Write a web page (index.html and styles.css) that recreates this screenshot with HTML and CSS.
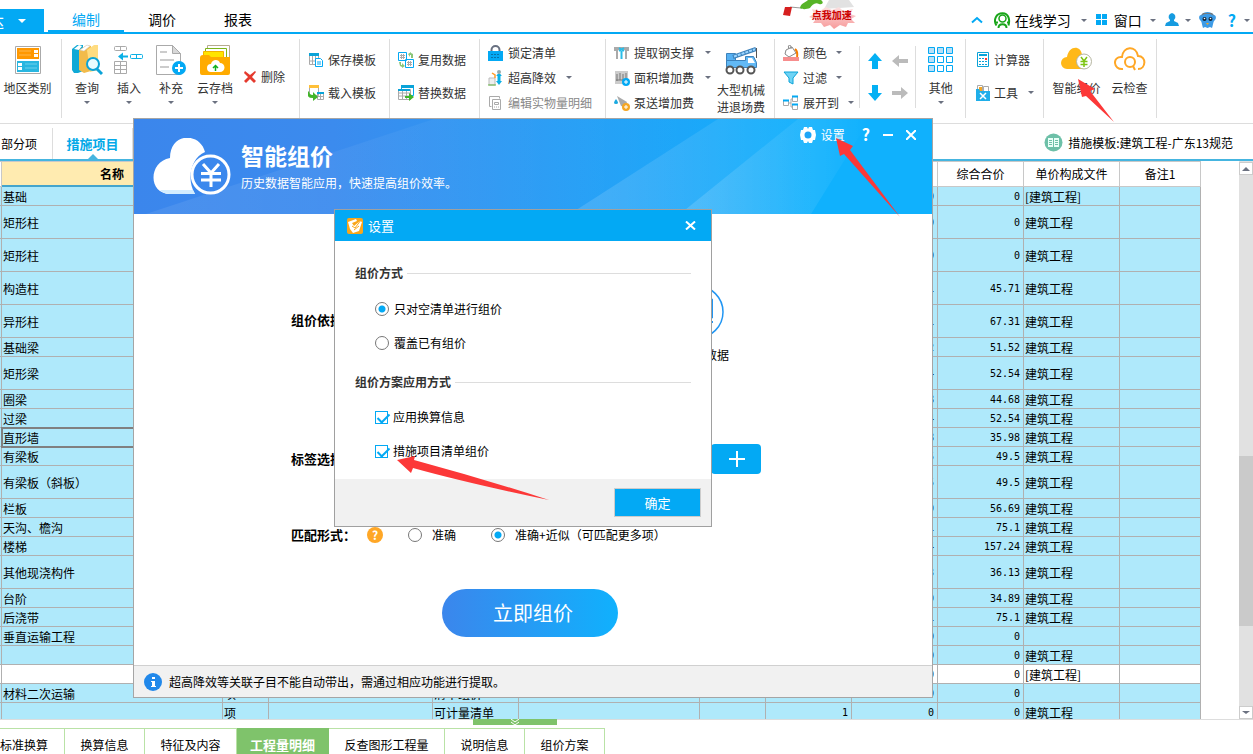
FILE: index.html
```html
<!DOCTYPE html>
<html lang="zh-CN">
<head>
<meta charset="utf-8">
<title>智能组价</title>
<link rel="stylesheet" href="styles.css">
</head>
<body>
<div class="app">
  <header class="topbar">
    <button class="app-menu">达<i class="caret"></i></button>
    <nav class="menu">
      <a href="#" class="active">编制</a>
      <a href="#">调价</a>
      <a href="#">报表</a>
    </nav>
    <a href="#" class="promo">
      <svg class="promo-art" width="78" height="32" viewBox="0 0 78 32">
        <defs><linearGradient id="burst" x2="0" y2="1"><stop offset="0" stop-color="#fbe0e0"/><stop offset="1" stop-color="#f79a9a"/></linearGradient></defs>
        <path d="M48 0h20l5 7-30 2z" fill="#e2e2e2"/>
        <path d="M9 7 20 8" stroke="#999" fill="none"/>
        <path d="M4 7l7 0-2 9-7-1z" fill="#d61f1f"/>
        <path d="M19 8c1-5 5-5 8-8h13c3 2 2 5-2 4-4-2-7 1-9 4-3 1-7 2-10 0z" fill="#57b427"/>
        <path d="M31 9l8 2 6-4 6 3 7-3 4 4 10-2-3 5 6 2-5 3 4 4-7 0-2 4-6-2-6 4-4-4-6 2-3-4-8 0 3-4-7-2 5-3z" fill="url(#burst)"/>
      </svg>
      <span>点我加速</span>
    </a>
    <div class="tools">
      <button aria-label="收起"><svg width="12" height="8" viewBox="0 0 12 8"><path d="M1 6.500 6 2l5 4.500" fill="none" stroke="#03a9f4" stroke-width="2"/></svg></button>
      <button class="learn"><svg width="17" height="17" viewBox="0 0 17 17" fill="none" stroke="#19a519"><circle cx="8.500" cy="6.500" r="3.500" stroke-width="1.500"/><path d="M2.500 13.500C-1 8 2 1.300 8.500 1.300S16 8 14.500 13.500" stroke-width="2"/><path d="M4.500 16c0-5 8-5 8 0M2 10.500h2M13 10.500h2" stroke-width="2"/></svg>在线学习<i class="caret"></i></button>
      <button class="win"><svg width="12" height="12" viewBox="0 0 12 12" fill="#03a9f4"><path d="M0 0h5v5H0zM6 0h5v5H6zM0 6h5v5H0zM6 6h5v5H6z"/></svg>窗口<i class="caret"></i></button>
      <button class="user" aria-label="用户"><svg width="14" height="14" viewBox="0 0 14 14" fill="#159be0"><path d="M7 0a4 4 0 0 1 2 7v1l4 2 1 3H0l1-3 4-2V7a4 4 0 0 1 2-7z"/></svg><i class="caret"></i></button>
      <button class="pet" aria-label="助手"><svg width="17" height="17" viewBox="0 0 17 17"><path d="M2 3c3-4 10-4 13 0 2 0 3 4 0 6-1 2-1 4-2 7l-2-1-2.500 1L6 15l-2 1C3 13 3 11 2 9-1 7 0 3 2 3z" fill="#3d9be6"/><path d="M2 4c4-3 9-3 13 0L13 1H4z" fill="#777"/><circle cx="5.500" cy="7" r="2" fill="#123"/><circle cx="11.500" cy="7" r="2" fill="#123"/><circle cx="5.500" cy="6.500" r=".8" fill="#fff"/><circle cx="11.500" cy="6.500" r=".8" fill="#fff"/><path d="M7 11h3l-1.500 2z" fill="#f5a623"/></svg></button>
      <button class="help"><b>?</b><i class="caret"></i></button>
    </div>
  </header>

  <section class="ribbon">
    <div class="group region">
      <button class="big"><svg width="26" height="28" viewBox="0 0 26 28"><path d="M.5.500h25v27H.5z" fill="#fff" stroke="#aaa"/><path d="M2 2h22v11H2z" fill="#ff9800"/><path d="M2 15h22v11H2z" fill="#29b6e0"/><path d="M4 5h12M4 9h12" stroke="#ffb84d"/><path d="M19 4h4v3h-4zM19 8h4v3h-4zM3 17h4v3H3zM3 21h4v3H3z" fill="#fff"/><path d="M10 18h12M10 22h12" stroke="#6fd0ec"/></svg>地区类别</button>
    </div>
    <div class="group edit">
      <button class="big"><svg width="32" height="32" viewBox="0 0 32 32"><path d="M1 5l5-4h6v26l-5 2H3l-2-3z" fill="#0fa9d6"/><path d="M3 5l5-4 3 1-3 4z" fill="#fff"/><path d="M8 6l8-5 4 1v25l-7 2-5-3z" fill="#f2bb4a"/><path d="M9 6l7-5 3 1-6 5z" fill="#fff" stroke="#ccc" stroke-width=".5"/><path d="M16 6l7-5h4v25l-8 2z" fill="#ffdc80"/><circle cx="22" cy="20" r="6" fill="#e8fbff" stroke="#0aa3d8" stroke-width="2"/><path d="M26 25l5 5" stroke="#0aa3d8" stroke-width="3"/></svg>查询<i class="caret"></i></button>
      <button class="big"><svg width="30" height="30" viewBox="0 0 30 30" fill="none"><g stroke="#aaa"><rect x=".5" y="1.500" width="12" height="4" rx="1"/><path d="M6.500 2v3M.5 16.500h12v12H.5zM.5 20.500h12M.5 24.500h12M6.500 16.500v12"/></g><path d="M14 11.500H6" stroke="#0ab0e6" stroke-width="2"/><path d="M4 11.500l5-4v8z" fill="#0ab0e6"/><rect x="16.500" y="9.500" width="12" height="4" rx="1" stroke="#0ab0e6"/><path d="M22.500 10v3" stroke="#0ab0e6"/></svg>插入<i class="caret"></i></button>
      <button class="big"><svg width="30" height="30" viewBox="0 0 30 30"><path d="M.5.500h16l8 8v21H.5z" fill="#fff" stroke="#aaa"/><path d="M16.500.500v8h8z" fill="#d8d8d8" stroke="#aaa"/><path d="M4 7h7M4 15h14M4 22h9" stroke="#ccc" stroke-width="2"/><circle cx="23" cy="23" r="7" fill="#03a9f4"/><path d="M23 19v8M19 23h8" stroke="#fff" stroke-width="2"/></svg>补充<i class="caret"></i></button>
      <button class="big wide"><svg width="30" height="30" viewBox="0 0 30 30"><path d="M7.500.500h22v20h-22z" fill="#fff" stroke="#b7ab8f"/><path d="M5.500 3.500h21v18h-21z" fill="#fff" stroke="#7cb518" /><path d="M3.500 6.500h20v16h-20z" fill="#ffe500" stroke="#f3b300"/><path d="M0 13q0-3 3-3h6l2 2h19v16q0 2-2 2H2q-2 0-2-2z" fill="#ffab00"/><path d="M11 27a4 4 0 0 1 0-8c1-5 8-5 9-1a4.500 4.500 0 0 1 0 9z" fill="#fff"/><path d="M15.500 26v-5M13 23l2.500-2.500L18 23" stroke="#12b01d" stroke-width="1.500" fill="none"/></svg>云存档<i class="caret"></i></button>
      <button class="small delete"><svg width="14" height="14" viewBox="0 0 14 14"><path d="M2 1l5 4 5-4 1 1-4 5 4 4-2 2-4-4-4 4-2-2 4-4L1 3z" fill="#e53a2e"/></svg>删除</button>
    </div>
    <div class="group two template">
      <button class="small"><svg width="16" height="16" viewBox="0 0 16 16"><path d="M1.500 1.500h9v11h-9zM1.500 9h9M4.500 4v8M7.500 4v8" fill="none" stroke="#aaa"/><path d="M1 1h10v3H1z" fill="#0aa3d8"/><path d="M7.500 6.500h5l2 2v6h-7z" fill="#fff" stroke="#03a9f4"/><path d="M9 10h4M9 12h4" stroke="#03a9f4"/></svg>保存模板</button>
      <button class="small"><svg width="16" height="16" viewBox="0 0 16 16"><path d="M1.500 1.500h9v9h-9zM9.500 8.500h6v6h-6zM10 11.500h5M12.500 9v6" fill="#fff" stroke="#aaa"/><path d="M1 0h10v3H1z" fill="#ffc038"/><path d="M9 7h7v2H9z" fill="#0aa3d8"/><path d="M1 6q0 4 4 4V7l5 5-5 4v-3Q-2 13 0 7z" fill="#42b529"/></svg>载入模板</button>
    </div>
    <div class="group two data">
      <button class="small"><svg width="16" height="16" viewBox="0 0 16 16"><path d="M.5.500h8v8h-8zM7.500 7.500h8v8h-8z" fill="#fff" stroke="#03a9f4"/><path d="M2 3.500h5M2 5.500h5M3.500 2v5M5.500 2v5M9 10.500h5M9 12.500h5M10.500 9v5M12.500 9v5" stroke="#aaa"/><path d="M10 2l3-2v1l2 1v4h-2V3h-1v2zM1 10h2v3h1v-2l3 3-3 2v-1l-2-1z" fill="#8cc679"/></svg>复用数据</button>
      <button class="small"><svg width="16" height="16" viewBox="0 0 16 16"><path d="M3.500 1.500h12v9h-12z" fill="#fff" stroke="#03a9f4"/><path d="M.5 4.500h12v10H.5zM1 8h12M1 11h12M4.500 5v9M8.500 5v9" fill="#fff" stroke="#aaa"/><path d="M3 0h13v3H3zM0 4h12v2H0z" fill="#0aa3d8"/><path d="M7 11h4V8l5 4-5 4v-3H7z" fill="#42b529"/></svg>替换数据</button>
    </div>
    <div class="group three lock">
      <button class="small"><svg width="16" height="16" viewBox="0 0 16 16"><path d="M3.500 7V5a4 4 0 0 1 8 0v2" fill="none" stroke="#687080" stroke-width="2"/><path d="M0 6h15v10H0z" fill="#03a9f4"/><path d="M3 9.500h9M3 12.500h9" stroke="#0872a8" stroke-dasharray="2 1"/></svg>锁定清单</button>
      <button class="small"><svg width="16" height="16" viewBox="0 0 16 16"><path d="M1 8h6v7H1z" fill="#eee" stroke="#bbb"/><path d="M11 4v8" stroke="#0ab0e6" stroke-width="3"/><path d="M8 6h6l-3-3zM8 11h6l-3 4z" fill="#0ab0e6"/><circle cx="11" cy="2" r="2" fill="#9aa"/><path d="M4 3l3 2v3" stroke="#ff9b28" stroke-width="1.500" fill="none"/><path d="M0 15h8" stroke="#67b544"/></svg>超高降效<i class="caret"></i></button>
      <button class="small muted"><svg width="16" height="16" viewBox="0 0 16 16" fill="none" stroke="#aaa"><path d="M3.500 11.500h-2v-10h10v2M4.500 4.500h8v10h-8zM6.500 7.500h4v2h-4zM6 12h1M8 12h1M10 12h1"/></svg>编辑实物量明细</button>
    </div>
    <div class="group crane">
      <div class="stack">
        <button class="small"><svg width="16" height="16" viewBox="0 0 16 16"><path d="M0 2h15v4h-2v8h-2V5H4v9H2V6H0z" fill="#aaa"/><path d="M7.500 14V6M5 6l5-3M5 3l5 3" stroke="#29bde8" stroke-width="2"/></svg>提取钢支撑<i class="caret"></i></button>
        <button class="small"><svg width="16" height="16" viewBox="0 0 16 16"><path d="M1 1h13v13H1z" fill="#ccc"/><path d="M3 4v7M6 3v7M9 4v6M12 3v7M2 10h11" stroke="#777"/><circle cx="12" cy="12" r="4" fill="#03a9f4"/><path d="M12 10v4M10 12h4" stroke="#fff"/></svg>面积增加费<i class="caret"></i></button>
        <button class="small"><svg width="16" height="16" viewBox="0 0 16 16"><path d="M3 1l10 6-2 5-4-1z" fill="#aaa"/><path d="M2 4q4 5 0 5-4 0 0-5" fill="#1aa9e0"/><circle cx="12" cy="12" r="4" fill="#f5a623"/><path d="M12 10v4M10 12h4" stroke="#fff"/></svg>泵送增加费</button>
      </div>
      <button class="big machine"><svg width="33" height="30" viewBox="0 0 33 30"><path d="M1.500 7.500h9v9h-9z" fill="#55b0f2" stroke="#3d82bb"/><path d="M8 11L31 3" stroke="#3d82bb" stroke-width="4"/><path d="M9 10.500L30 3.300" stroke="#9bd5ff" stroke-width="2" stroke-dasharray="3 1"/><path d="M31.500 2v10" stroke="#555"/><path d="M1.500 14.500h19v-4h8l3 6v5h-30z" fill="#62b9f5" stroke="#3d82bb"/><path d="M23 12h4l3 5h-7z" fill="#fff"/><g fill="#fff" stroke="#555" stroke-width="2"><circle cx="5" cy="24" r="3.500"/><circle cx="15" cy="24" r="3.500"/><circle cx="26" cy="24" r="3.500"/></g></svg>大型机械<br>进退场费</button>
    </div>
    <div class="group view">
      <div class="stack">
        <button class="small"><svg width="16" height="16" viewBox="0 0 16 16"><path d="M3 5l6-3 4 6-7 4-4-3z" fill="#fff" stroke="#888"/><path d="M6 4q-2-5 2-3v3" fill="none" stroke="#888"/><path d="M12 4q3 2 2 8" stroke="#f57c00" stroke-width="2" fill="none"/><path d="M0 12h16v4H0z" fill="#f78d8d"/></svg>颜色<i class="caret"></i></button>
        <button class="small"><svg width="16" height="16" viewBox="0 0 16 16"><path d="M1 2h14l-5 6v6l-4-2V8z" fill="#6fd3f5" stroke="#0aa3d8"/></svg>过滤<i class="caret"></i></button>
        <button class="small"><svg width="16" height="16" viewBox="0 0 16 16" fill="#fff" stroke="#aaa"><path d="M.5 5.500h5v5h-5zM9.500 1.500h5v5h-5zM9.500 9.500h5v5h-5zM6 8h2V4h1M8 8v4h1"/><path d="M0 5.500h6M9 1.500h6M9 9.500h6" stroke="#03a9f4" stroke-width="2"/></svg>展开到<i class="caret"></i></button>
      </div>
      <div class="moves">
        <button aria-label="上移"><svg width="16" height="16" viewBox="0 0 16 16"><path d="M8 0l7 8h-4v8H5V8H1z" fill="#03b0f4"/></svg></button>
        <button aria-label="左移"><svg width="16" height="16" viewBox="0 0 16 16"><path d="M0 8l7-6v4h9v4H7v4z" fill="#bbb"/></svg></button>
        <button aria-label="下移"><svg width="16" height="16" viewBox="0 0 16 16"><path d="M8 16l7-8h-4V0H5v8H1z" fill="#03b0f4"/></svg></button>
        <button aria-label="右移"><svg width="16" height="16" viewBox="0 0 16 16"><path d="M16 8L9 2v4H0v4h9v4z" fill="#bbb"/></svg></button>
      </div>
      <button class="big others"><svg width="26" height="26" viewBox="0 0 26 26" fill="#fff" stroke="#03a9f4"><path d="M9.500 9.500h6v6h-6zM18.500 9.500h6v6h-6zM9.500 18.500h6v6h-6zM18.500 18.500h6v6h-6z"/><path fill="#b9e0f7" d="M.5.500h6v6h-6zM9.500.500h6v6h-6zM18.500.500h6v6h-6zM.5 9.500h6v6h-6zM.5 18.500h6v6h-6z"/></svg>其他<i class="caret"></i></button>
    </div>
    <div class="group two utility">
      <button class="small"><svg width="14" height="16" viewBox="0 0 14 16"><path d="M1.500.500h11v14h-11z" fill="#fff" stroke="#0aa3d8"/><path d="M3 2h8v2H3z" fill="#0aa3d8"/><path d="M3 6.500h8M3 9.500h8M3 12.500h8" stroke="#0aa3d8" stroke-dasharray="2 1"/><path d="M9 6h2v2H9z" fill="#f33"/></svg>计算器</button>
      <button class="small"><svg width="14" height="16" viewBox="0 0 14 16"><path d="M1.500.500h5v7h-5zM7.500 1.500h5v7h-5z" fill="#fff" stroke="#aaa"/><path d="M3 3h3M3 5h3" stroke="#f5a623" stroke-width="2"/><path d="M0 4h3l1 2h10v10H0z" fill="#1faee9"/><path d="M4 8l6 6M10 8l-6 6" stroke="#fff" stroke-width="1.500"/></svg>工具<i class="caret"></i></button>
    </div>
    <div class="group cloud">
      <button class="big"><svg width="32" height="26" viewBox="0 0 32 26"><path d="M6 22a6 6 0 0 1 0-12C8-2 20-2 21 8l2 14z" fill="#ffb819"/><circle cx="23" cy="14.500" r="7.500" fill="#fff" stroke="#b5b5a0"/><path d="M20 10l3 4 3-4M23 14v6M19.500 14.500h7M19.500 17.500h7" stroke="#7dc512" stroke-width="1.500" fill="none"/></svg>智能组价</button>
      <button class="big"><svg width="32" height="26" viewBox="0 0 32 26" fill="none" stroke="#ffa726" stroke-width="2"><path d="M9 22c-10 1-11-13-1-12C9-1 22-2 24 9c9 0 8 13 0 13"/><circle cx="16" cy="15" r="5"/><path d="M19 19l2 4"/></svg>云检查</button>
    </div>
  </section>

  <section class="subbar">
    <a href="#" class="first">部分项</a>
    <a href="#" class="active">措施项目</a>
    <div class="norm"><svg width="19" height="19" viewBox="0 0 19 19"><circle cx="9.500" cy="9.500" r="9" fill="#6dc0a8"/><path d="M4 5h5v9H4zM10 5h5v9h-5z" fill="#eafff8"/><path d="M5 7.500h3M5 9.500h3M5 11.500h3M11 7.500h3M11 9.500h3M11 11.500h3" stroke="#6dc0a8"/></svg>措施模板:建筑工程-广东13规范</div>
  </section>

  <main class="grid">
    <div class="table-wrap">
    <table>
      <colgroup><col class="c-mark"><col class="c-name"><col class="c-unit"><col class="c-desc"><col class="c-mode"><col class="c-expr"><col class="c-rate"><col class="c-money"><col class="c-money"><col class="c-money"><col class="c-file"><col class="c-note"></colgroup>
      <thead><tr><th><th class="picked">名称<th><th><th><th><th><th><th><th>综合合价<th>单价构成文件<th>备注1</thead>
      <tbody>
      <tr><td><td>基础<td><td><td><td><td><td><td>0<td>0<td>[建筑工程]<td>
      <tr class="tall"><td><td>矩形柱<td><td><td><td><td><td><td>0<td>0<td>建筑工程<td>
      <tr class="tall"><td><td>矩形柱<td><td><td><td><td><td><td>0<td>0<td>建筑工程<td>
      <tr class="tall"><td><td>构造柱<td><td><td><td><td><td><td>45.71<td>45.71<td>建筑工程<td>
      <tr class="tall"><td><td>异形柱<td><td><td><td><td><td><td>67.31<td>67.31<td>建筑工程<td>
      <tr><td><td>基础梁<td><td><td><td><td><td><td>51.52<td>51.52<td>建筑工程<td>
      <tr class="tall"><td><td>矩形梁<td><td><td><td><td><td><td>52.54<td>52.54<td>建筑工程<td>
      <tr><td><td>圈梁<td><td><td><td><td><td><td>44.68<td>44.68<td>建筑工程<td>
      <tr><td><td>过梁<td><td><td><td><td><td><td>52.54<td>52.54<td>建筑工程<td>
      <tr><td><td class="current">直形墙<td><td><td><td><td><td><td>35.98<td>35.98<td>建筑工程<td>
      <tr><td><td>有梁板<td><td><td><td><td><td><td>49.5<td>49.5<td>建筑工程<td>
      <tr class="tall"><td><td>有梁板（斜板）<td><td><td><td><td><td><td>49.5<td>49.5<td>建筑工程<td>
      <tr><td><td>栏板<td><td><td><td><td><td><td>56.69<td>56.69<td>建筑工程<td>
      <tr><td><td>天沟、檐沟<td><td><td><td><td><td><td>75.1<td>75.1<td>建筑工程<td>
      <tr><td><td>楼梯<td><td><td><td><td><td><td>157.24<td>157.24<td>建筑工程<td>
      <tr class="tall"><td><td>其他现浇构件<td><td><td><td><td><td><td>36.13<td>36.13<td>建筑工程<td>
      <tr><td><td>台阶<td><td><td><td><td><td><td>34.89<td>34.89<td>建筑工程<td>
      <tr><td><td>后浇带<td><td><td><td><td><td><td>75.1<td>75.1<td>建筑工程<td>
      <tr><td><td>垂直运输工程<td><td><td><td><td><td><td>0<td>0<td><td>
      <tr><td><td><td><td><td><td><td><td><td>0<td>0<td>建筑工程<td>
      <tr class="plain"><td><td><td><td><td><td><td><td><td>0<td>0<td>[建筑工程]<td>
      <tr><td><td>材料二次运输<td>项<td><td>清单组价<td><td><td><td>0<td>0<td><td>
      <tr><td><td><td>项<td><td>可计量清单<td><td><td>1<td>0<td>0<td>建筑工程<td>
      </tbody>
    </table>
    </div>
    <div class="scroll"><button aria-label="向上滚动"><i class="caret up"></i></button><div class="track"><div class="thumb"></div></div><button aria-label="向下滚动"><i class="caret"></i></button></div>
  </main>

  <footer class="bottom">
    <button class="handle" aria-label="收起面板"><svg width="10" height="7" viewBox="0 0 10 7"><path d="M1 0l4 3 4-3M1 3l4 3 4-3" fill="none" stroke="#fff"/></svg></button>
    <nav class="sheets">
      <a href="#">标准换算</a><a href="#">换算信息</a><a href="#">特征及内容</a><a href="#" class="active">工程量明细</a><a href="#">反查图形工程量</a><a href="#">说明信息</a><a href="#">组价方案</a>
    </nav>
  </footer>

  <section class="dialog">
    <div class="hero">
      <svg class="beams" viewBox="0 0 798 95" preserveAspectRatio="none">
        <defs><linearGradient id="fade"><stop offset="0" stop-color="#fff" stop-opacity=".16"/><stop offset="1" stop-color="#fff" stop-opacity="0"/></linearGradient></defs>
        <path d="M12 95 300 0h284L436 95z" fill="url(#fade)" opacity=".5"/>
        <path d="M436 95 584 0h152l-59 95z" fill="url(#fade)"/>
        <path d="M546 95 664 0h72l-59 95z" fill="url(#fade)"/>
      </svg>
      <svg class="hero-icon" width="78" height="58" viewBox="0 0 78 58"><path d="M17 56C-5 56-5 24 17 20 17-6 47-6 52 14 38 20 33 41 42 56z" fill="#fff"/><path d="M7 52h33l2 4H17q-6 0-10-4z" fill="#d3edff"/><circle cx="57.500" cy="36.500" r="18.500" fill="none" stroke="#fff" stroke-width="3"/><path d="M50 26l8 9 8-9M58 35v14M48 35.500h20M48 42h20" fill="none" stroke="#fff" stroke-width="3"/></svg>
      <div class="hero-text"><h1>智能组价</h1><p>历史数据智能应用，快速提高组价效率。</p></div>
      <div class="hero-tools">
        <button class="gear"><svg width="16" height="16" viewBox="0 0 16 16"><path d="M4 0h3l1 2 1-2h3l1 3h2l1 5-1 5h-2l-1 3H9l-1-2-1 2H4l-1-3H1L0 8l1-5h2z" fill="#fff"/><circle cx="8" cy="8" r="3.500" fill="#1fa6f8"/></svg>设置</button>
        <button><b>?</b></button>
        <button aria-label="最小化"><svg width="10" height="10" viewBox="0 0 10 10"><path d="M0 5h10" stroke="#fff" stroke-width="2"/></svg></button>
        <button aria-label="关闭"><svg width="10" height="10" viewBox="0 0 10 10"><path d="M0 0l10 10M10 0L0 10" stroke="#fff" stroke-width="2"/></svg></button>
      </div>
    </div>
    <div class="dialog-body">
      <div class="line basis"><strong>组价依据：</strong>
        <button class="source"><svg width="54" height="54" viewBox="0 0 54 54"><circle cx="27" cy="27" r="26" fill="none" stroke="#2196f3" stroke-width="1.500"/><path d="M13 14h29.500v19H13zM42.500 36v2" fill="none" stroke="#2196f3"/></svg><span>数据</span></button>
      </div>
      <div class="line tags"><strong>标签选择：</strong><button class="add" aria-label="添加"><svg width="16" height="16" viewBox="0 0 16 16"><path d="M8 0v16M0 8h16" stroke="#fff" stroke-width="2"/></svg></button></div>
      <div class="line match"><strong>匹配形式：</strong><button class="tip">?</button>
        <label class="exact"><input type="radio" name="match">准确</label>
        <label><input type="radio" name="match" checked>准确+近似（可匹配更多项）</label>
      </div>
      <button class="go">立即组价</button>
    </div>
    <div class="notice"><svg width="18" height="18" viewBox="0 0 18 18"><circle cx="9" cy="9" r="9" fill="#2188ea"/><path d="M8 4h3v2H8zM7 8h4v5h1v1H7v-1h1V9H7z" fill="#fff"/></svg>超高降效等关联子目不能自动带出，需通过相应功能进行提取。</div>
  </section>

  <section class="settings">
    <div class="settings-head"><svg width="16" height="16" viewBox="0 0 16 16"><rect width="16" height="16" rx="2" fill="#f9a61a"/><path d="M1 4l8-3 1 2-5 2 2 3 6-5 2 1-1 3-2 6-6 2-3-4z" fill="#fff"/><path d="M5 8l3 2 6-8M7 12l5-4" stroke="#f9a61a" fill="none"/></svg><h2>设置</h2><button aria-label="关闭"><svg width="11" height="9" viewBox="0 0 11 9"><path d="M1 .5l9 8M10 .5l-9 8" stroke="#fff" stroke-width="2"/></svg></button></div>
    <div class="settings-body">
      <h3>组价方式</h3>
      <label><input type="radio" name="mode" checked>只对空清单进行组价</label>
      <label><input type="radio" name="mode">覆盖已有组价</label>
      <h3>组价方案应用方式</h3>
      <label><input type="checkbox" checked>应用换算信息</label>
      <label><input type="checkbox" checked>措施项目清单组价</label>
    </div>
    <div class="settings-foot"><button>确定</button></div>
  </section>

  <svg class="arrow arrow-cloud" width="36" height="43" viewBox="0 0 36 43"><path d="M0 0l17 10-5 2 24 31L8 17l-4 1z" fill="#fc3838"/></svg>
  <svg class="arrow arrow-gear" width="65" height="80" viewBox="0 0 65 80"><path d="M0 0l17 8-3 4 50 67L8 16l-4 2z" fill="#fc3838"/></svg>
  <svg class="arrow arrow-check" width="152" height="46" viewBox="0 0 152 46"><path d="M0 4L18 0l-1 4q70 19 135 40Q70 27 16 12l-2 5z" fill="#fc3838"/></svg>
</div>
</body>
</html>
```
FILE: styles.css
```css
* { box-sizing: border-box; }
body { margin: 0; font: 12px/16px "Noto Sans CJK SC", sans-serif; color: #000; background: #fff; }
button { font: inherit; color: inherit; background: none; border: 0; padding: 0; margin: 0; }
a { color: inherit; text-decoration: none; }
h1, h2, h3, p { margin: 0; }
svg { flex: none; display: block; }
.app { position: relative; display: flex; flex-direction: column; height: 100vh; overflow: hidden; }
.caret { flex: none; width: 0; height: 0; border: 3px solid transparent; border-top-color: #6b7180; border-bottom: 0; }
.caret.up { border-top: 0; border-bottom: 4px solid #6b7180; }

.topbar { flex: none; display: flex; height: 34px; border-bottom: 2px solid #03a9f4; font-size: 14px; }
.app-menu { align-self: flex-end; display: flex; align-items: center; justify-content: flex-end; gap: 14px; width: 44px; height: 23px; padding-right: 18px; overflow: hidden; background: #03a9f4; color: #fff; font-size: 16px; }
.app-menu .caret { border-width: 4px 4px 0; border-top-color: #fff; }
.menu { display: flex; margin-left: 4px; }
.menu a { width: 76px; padding-top: 11px; text-align: center; }
.menu .active { color: #03a9f4; border-bottom: 2px solid #03a9f4; }
.promo { position: relative; width: 78px; margin: 0 112px 0 auto; font-size: 10px; font-weight: 700; color: #c00; }
.promo span { position: absolute; right: 7px; top: 7px; }
.tools { display: flex; align-items: center; padding-top: 8px; padding-right: 3px; }
.tools button { display: flex; align-items: center; }
.tools .learn { gap: 4px; margin-left: 11px; }
.tools .learn .caret { margin-left: 6px; }
.tools .win { gap: 6px; margin-left: 9px; }
.tools .win .caret { margin-left: 2px; }
.tools .user { gap: 6px; margin-left: 9px; }
.tools .pet { margin-left: 8px; }
.tools .help { gap: 8px; margin-left: 12px; color: #03a9f4; font-size: 16px; }

.ribbon { flex: none; display: flex; padding: 5px 0; border-bottom: 1px solid #ddd; color: #333; }
.group { flex: none; display: flex; height: 79px; border-right: 1px solid #ddd; }
.big { display: flex; flex-direction: column; align-items: center; width: 42px; padding-top: 5px; line-height: 16px; white-space: nowrap; }
.big svg { height: 32px; margin-bottom: 4px; }
.big .caret { margin-top: 5px; }
.small { display: flex; align-items: center; gap: 4px; white-space: nowrap; }
.small .caret { margin-left: 6px; }
.region { width: 62px; padding-right: 6px; justify-content: flex-end; }
.region .big { width: 56px; }
.edit { width: 238px; padding-left: 4px; }
.edit .big { width: 42px; }
.edit .wide { width: 46px; }
.delete { height: 33px; margin: 21px 0 0 5px; }
.two, .three { flex-direction: column; }
.two { padding-top: 4px; }
.two .small { height: 33px; }
.three, .stack { padding-top: 1px; }
.three .small, .stack .small { height: 25px; }
.template { width: 90px; padding-left: 8px; }
.data { width: 90px; padding-left: 8px; }
.lock { width: 126px; padding-left: 8px; }
.muted { color: #888; }
.crane { width: 169px; padding-left: 8px; }
.stack { width: 94px; }
.stack .small .caret { margin-left: 7px; }
.crane .machine { display: block; width: 66px; padding-top: 3px; line-height: 17px; }
.machine svg { height: 30px; margin: 0 auto 5px; }
.view { width: 191px; padding-left: 8px; }
.view .stack { width: 77px; }
.view .stack .small .caret { margin-left: 5px; }
.moves { display: grid; grid-template-columns: 16px 16px; column-gap: 9px; row-gap: 16px; align-content: center; width: 57px; height: 62px; margin-top: 7px; padding: 0 7px; border: solid #ddd; border-width: 0 1px; }
.others { width: 49px; }
.utility { width: 78px; padding-left: 10px; }
.cloud { width: 113px; padding-left: 6px; }
.cloud .big { width: 54px; }

.subbar { flex: none; display: flex; align-items: flex-end; height: 37px; border-bottom: 2px solid #45b5e0; }
.subbar a { display: flex; align-items: center; height: 31px; border-right: 1px solid #ddd; }
.subbar .first { width: 53px; padding-left: 1px; }
.subbar .active { position: relative; width: 80px; justify-content: center; font-size: 13px; font-weight: 700; color: #03a9e8; }
.subbar .active::after { content: ""; position: absolute; bottom: 0; left: 35px; border: 5px solid transparent; border-top: 0; border-bottom-color: #45b5e0; }
.norm { display: flex; align-items: center; gap: 5px; height: 33px; margin: 0 20px 0 auto; }

.grid { flex: 1; min-height: 0; display: flex; justify-content: space-between; overflow: hidden; }
.table-wrap { overflow: hidden; }
table { width: 1201px; table-layout: fixed; border-spacing: 0; }
.c-mark { width: 2px; } .c-name { width: 221px; } .c-unit { width: 46px; } .c-desc { width: 164px; }
.c-mode { width: 86px; } .c-expr { width: 181px; } .c-rate { width: 66px; } .c-money { width: 86px; }
.c-file { width: 96px; } .c-note { width: 81px; }
th { height: 26px; padding: 0; font-weight: 400; border: solid #c8c8c8; border-width: 1px 1px 1px 0; }
th.picked { background: #ffebb0; border-bottom: 2px solid #45a5cc; font-weight: 700; }
td { height: 19px; padding: 2px 1px 0; border: solid #b0b0b0; border-width: 0 1px 1px 0; background: #afe9fb; white-space: nowrap; }
td:first-child { padding: 0; }
.tall td { height: 33px; }
.plain td { background: #fff; }
td:nth-child(n+7):nth-child(-n+10) { padding-right: 3px; text-align: right; font: 10px/16px "DejaVu Sans Mono", monospace; }
.current { outline: 2px solid #808080; outline-offset: -1px; }
.scroll { flex: none; display: flex; flex-direction: column; width: 14px; background: #e1e1e1; padding-top: 1px; }
.scroll button { display: flex; align-items: center; justify-content: center; height: 13px; background: #fff; border: 1px solid #ccc; }
.scroll button .caret { border-left-width: 4px; border-right-width: 4px; }
.track { flex: 1; display: flex; flex-direction: column; justify-content: flex-end; }
.thumb { height: 32%; margin-bottom: 80px; background: #cacaca; }

.bottom { position: relative; flex: none; height: 35px; padding-top: 8px; border-top: 1px solid #ddd; }
.handle { position: absolute; top: -1px; left: 473px; display: flex; justify-content: center; width: 84px; height: 6px; background: #7fc36b; }
.sheets { display: flex; height: 26px; }
.sheets a { width: 80px; padding-top: 8px; text-align: center; border: solid #b9e2a6; border-width: 1px 1px 0 0; }
.sheets a:nth-child(1) { width: 65px; text-align: left; }
.sheets a:nth-child(3) { width: 92px; }
.sheets a:nth-child(4) { width: 92px; }
.sheets a:nth-child(5) { width: 116px; }
.sheets .active { background: #7fc36b; border-color: #7fc36b; color: #fff; font-weight: 700; font-size: 13px; }

.dialog { position: absolute; left: 133px; top: 118px; display: flex; flex-direction: column; width: 800px; background: #fff; border: 1px solid #a5a5a5; }
.hero { position: relative; display: flex; height: 95px; padding: 19px 0 0 19px; background: linear-gradient(90deg, #3b86ec, #3b8bee 25%, #10b1fd 85%); color: #fff; }
.beams { position: absolute; inset: 0; width: 100%; height: 100%; }
.hero-icon, .hero-text, .hero-tools { position: relative; }
.hero-text { margin-left: 10px; }
h1 { font-size: 23px; line-height: 34px; }
.hero-text p { margin-top: 3px; line-height: 16px; }
.hero-tools { display: flex; align-items: center; gap: 13px; height: 16px; margin: -11px 16px 0 auto; }
.hero-tools b { font-size: 16px; }
.gear { display: flex; gap: 5px; margin-right: 4px; }
.dialog-body { height: 451px; padding: 71px 0 0 157px; font-size: 12px; }
.line { display: flex; align-items: center; height: 30px; }
.line strong { width: 68px; font-size: 13px; }
.basis { align-items: flex-start; height: 78px; margin-bottom: 81px; }
.basis strong { padding-top: 27px; }
.source { display: flex; flex-direction: column; align-items: center; gap: 8px; width: 54px; margin-left: 311px; }
.source span { align-self: flex-end; margin-right: -5px; }
.add { display: flex; align-items: center; justify-content: center; width: 50px; height: 30px; margin-left: 352px; padding-left: 2px; border-radius: 4px; background: #03a9f4; }
.match { margin-top: 46px; }
.match strong { width: 76px; }
.tip { width: 16px; height: 16px; border-radius: 8px; background: #ffa726; color: #fff; font-weight: 700; line-height: 16px; }
label { display: flex; align-items: center; gap: 10px; }
.exact { margin: 0 35px 0 25px; }
input { appearance: none; flex: none; width: 14px; height: 14px; margin: 0; border: 1px solid #777; background: #fff; }
input[type="radio"] { border-radius: 50%; }
input[type="radio"]:checked { background: radial-gradient(circle, #03a9f4 3px, #fff 4px); }
input[type="checkbox"] { position: relative; width: 13px; height: 13px; border-color: #03a9f4; }
input[type="checkbox"]:checked::after { content: ""; position: absolute; left: 4px; top: -1px; width: 5px; height: 10px; border: solid #03a9f4; border-width: 0 2px 2px 0; transform: rotate(45deg); }
.go { display: block; width: 176px; height: 48px; margin: 39px 0 0 151px; padding-left: 6px; border-radius: 24px; background: linear-gradient(90deg, #3b86ec, #10b1fd); color: #fff; font-size: 20px; }
.notice { display: flex; align-items: center; gap: 7px; height: 32px; padding-left: 10px; border-top: 1px solid #d0d0d0; background: #f1f1f1; }

.settings { position: absolute; left: 334px; top: 209px; width: 378px; background: #fff; border: 1px solid #a0a0a0; }
.settings-head { display: flex; align-items: center; gap: 5px; height: 31px; padding: 0 15px 0 12px; background: #03a9f4; color: #fff; }
.settings-head h2 { font-size: 13px; font-weight: 400; }
.settings-head button { margin-left: auto; }
.settings-body { height: 238px; padding: 24px 20px 0; }
h3 { display: flex; align-items: center; gap: 4px; font-size: 12px; line-height: 16px; color: #333; }
h3::after { content: ""; flex: 1; height: 1px; background: #ddd; }
.settings label { gap: 5px; height: 34px; margin-left: 20px; }
.settings h3 + label { margin-top: 11px; }
.settings label + h3 { margin-top: 14px; }
.settings label + h3 + label { margin-top: 10px; }
.settings-foot { display: flex; justify-content: flex-end; padding: 9px 10px; background: #f1f1f1; }
.settings-foot button { width: 87px; height: 29px; border: 1px solid #ccc; background: #03a9f4; color: #fff; font-size: 13px; }

.arrow { position: absolute; pointer-events: none; }
.arrow-cloud { left: 1078px; top: 79px; }
.arrow-gear { left: 836px; top: 138px; }
.arrow-check { left: 397px; top: 456px; }
```
